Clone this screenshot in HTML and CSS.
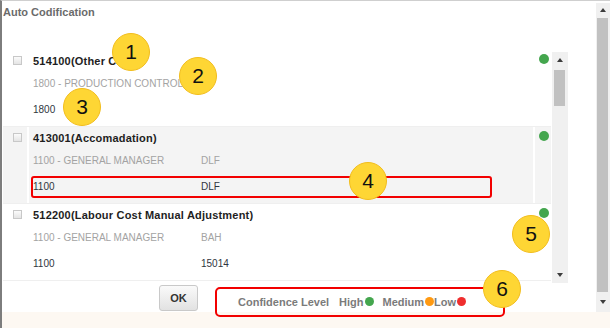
FILE: index.html
```html
<!DOCTYPE html>
<html lang="en">
<head>
  <meta charset="UTF-8">
  <title>Auto Codification</title>
  <link rel="stylesheet" href="styles.css">
</head>
<body>
  <div class="window">
    <div class="window-body">
      <div class="dialog">
        <div class="dialog-title">Auto Codification</div>
        <div class="list-wrap">
          <div class="list">
            <div class="row">
              <div class="cell cell-check"><span class="check"></span></div>
              <div class="cell cell-main">
                <div class="acc-code">514100(Other Cost)</div>
                <div class="acc-line muted"><span>1800 - PRODUCTION CONTROL</span></div>
                <div class="acc-box"><span>1800</span></div>
              </div>
              <div class="cell cell-dot"><span class="dot high"></span></div>
            </div>
            <div class="row alt">
              <div class="cell cell-check"><span class="check"></span></div>
              <div class="cell cell-main">
                <div class="acc-code">413001(Accomadation)</div>
                <div class="acc-line muted"><span>1100 - GENERAL MANAGER</span><span>DLF</span></div>
                <div class="acc-box marked"><span>1100</span><span>DLF</span></div>
              </div>
              <div class="cell cell-dot"><span class="dot high"></span></div>
            </div>
            <div class="row">
              <div class="cell cell-check"><span class="check"></span></div>
              <div class="cell cell-main">
                <div class="acc-code">512200(Labour Cost Manual Adjustment)</div>
                <div class="acc-line muted"><span>1100 - GENERAL MANAGER</span><span>BAH</span></div>
                <div class="acc-box"><span>1100</span><span>15014</span></div>
              </div>
              <div class="cell cell-dot"><span class="dot high"></span></div>
            </div>
          </div>
          <div class="scrollbar scrollbar-inner">
            <div class="sb-btn"><span class="arrow-up"></span></div>
            <div class="sb-thumb"></div>
            <div class="sb-space"></div>
            <div class="sb-btn"><span class="arrow-down"></span></div>
          </div>
        </div>
        <div class="footer">
          <button class="btn-ok">OK</button>
          <div class="legend">
            <span>Confidence Level</span>
            <span class="legend-item">High</span><span class="legend-dot high"></span>
            <span class="legend-item medium-label">Medium</span><span class="legend-dot medium"></span>
            <span>Low</span><span class="legend-dot low"></span>
          </div>
        </div>
      </div>
      <div class="scrollbar scrollbar-outer">
        <div class="sb-btn"><span class="arrow-up"></span></div>
        <div class="sb-thumb"></div>
        <div class="sb-btn sb-btn-last"><span class="arrow-down"></span></div>
      </div>
    </div>
    <div class="window-foot"></div>
  </div>

  <div class="badge badge-1">1</div>
  <div class="badge badge-2">2</div>
  <div class="badge badge-3">3</div>
  <div class="badge badge-4">4</div>
  <div class="badge badge-5">5</div>
  <div class="badge badge-6">6</div>
</body>
</html>
```

FILE: styles.css
```css
* {
  box-sizing: border-box;
}
body {
  margin: 0;
  background: #fff;
  font-family: 'Liberation Sans', Arial, sans-serif;
  color: #333;
}
.window {
  width: 610px;
  height: 328px;
  border-top: 1px solid #cfcfcf;
  border-left: 2px solid #7d7d7d;
  display: flex;
  flex-direction: column;
}
.window-body {
  display: flex;
  height: 311px;
}
.window-foot {
  flex: 1;
  background: #fdf8f2;
}
.dialog {
  flex: 1;
  display: flex;
  flex-direction: column;
}
.dialog-title {
  height: 49px;
  padding: 4px 0 0 1px;
  font-size: 11px;
  line-height: 14px;
  font-weight: 700;
  color: #6b6b6b;
}
.list-wrap {
  display: flex;
  height: 233px;
}
.list {
  width: 548px;
  margin-left: 1px;
}
.row {
  display: grid;
  grid-template-columns: 24px 504px 16px;
  column-gap: 2px;
  height: 77px;
  border-bottom: 1px solid #efefef;
}
.row.alt .cell {
  background: #f4f4f4;
}
.check {
  display: block;
  width: 9px;
  height: 9px;
  margin: 6px 0 0 10px;
  border: 1px solid #c8c8c8;
  background: linear-gradient(#fbfbfb, #e4e4e4);
}
.acc-code {
  height: 24px;
  line-height: 22px;
  padding-left: 4px;
  font-size: 11px;
  font-weight: 700;
  letter-spacing: 0.2px;
  color: #1e1e1e;
  white-space: nowrap;
}
.acc-line {
  display: grid;
  grid-template-columns: 168px 1fr;
  height: 19px;
  line-height: 19px;
  padding-left: 4px;
  font-size: 10px;
  white-space: nowrap;
}
.muted {
  color: #a3a3a3;
}
.acc-box {
  display: grid;
  grid-template-columns: 168px 1fr;
  width: 461px;
  height: 22px;
  margin: 6px 0 0 2px;
  border: 2px solid transparent;
  border-radius: 3px;
  line-height: 18px;
  font-size: 10px;
  color: #2f3640;
}
.acc-box.marked {
  border-color: #f20000;
}
.dot {
  display: block;
  width: 10px;
  height: 10px;
  margin: 4px 0 0 4px;
  border-radius: 50%;
}
.high { background: #44a64e; }
.medium { background: #ff9a12; }
.low { background: #ef2e2e; }

.scrollbar {
  display: flex;
  flex-direction: column;
  background: #f0f0f0;
}
.scrollbar-inner {
  width: 16px;
  height: 231px;
  margin: 2px 0 0 1px;
}
.scrollbar-inner .sb-btn {
  height: 16px;
}
.scrollbar-inner .sb-thumb {
  height: 36px;
  margin: 2px 3px 0 2px;
}
.sb-space {
  flex: 1;
}
.scrollbar-outer {
  width: 14px;
  height: 309px;
  margin-top: 2px;
}
.scrollbar-outer .sb-btn {
  height: 14px;
}
.scrollbar-outer .sb-thumb {
  height: 274px;
  margin: 1px 2px 0 1px;
}
.scrollbar-outer .sb-btn-last {
  flex: 1;
}
.sb-btn {
  display: flex;
  align-items: center;
  justify-content: center;
}
.sb-thumb {
  background: #c1c1c1;
}
.arrow-up {
  width: 0;
  height: 0;
  border-style: solid;
  border-width: 0 3.5px 4px 3.5px;
  border-color: transparent transparent #3c3c3c transparent;
}
.arrow-down {
  width: 0;
  height: 0;
  border-style: solid;
  border-width: 4px 3.5px 0 3.5px;
  border-color: #3c3c3c transparent transparent transparent;
}

.footer {
  display: flex;
  align-items: flex-start;
  height: 29px;
}
.btn-ok {
  width: 39px;
  height: 26px;
  margin: 2px 0 0 157px;
  padding: 0;
  border: 1px solid #c9c9c9;
  border-radius: 3px;
  background: linear-gradient(#fafafa, #e2e2e2);
  font-family: 'Liberation Sans', Arial, sans-serif;
  font-size: 11px;
  font-weight: 700;
  color: #333;
}
.legend {
  position: relative;
  display: flex;
  align-items: center;
  width: 290px;
  height: 30px;
  margin: 4px 0 0 17px;
  padding: 0 0 1px 21px;
  border: 2px solid #f20000;
  border-radius: 5px;
  font-size: 11px;
  line-height: 14px;
  font-weight: 700;
  color: #7b7b7b;
  white-space: nowrap;
}
.legend-item {
  margin-left: 10px;
}
.legend-item.medium-label {
  margin-left: 9px;
}
.legend-dot {
  display: inline-block;
  width: 9px;
  height: 9px;
  margin-left: 1px;
  border-radius: 50%;
}

.badge {
  position: absolute;
  width: 38px;
  height: 38px;
  border-radius: 50%;
  background: #fed634;
  border: 1.5px solid #f2bd1c;
  display: flex;
  align-items: center;
  justify-content: center;
  font-family: 'Liberation Sans', Arial, sans-serif;
  font-size: 21px;
  color: #111;
}
.badge-1 { left: 112px; top: 33px; }
.badge-2 { left: 179px; top: 57px; }
.badge-3 { left: 63px; top: 88px; }
.badge-4 { left: 349px; top: 162px; }
.badge-5 { left: 512px; top: 215px; }
.badge-6 { left: 483px; top: 270px; }
```
